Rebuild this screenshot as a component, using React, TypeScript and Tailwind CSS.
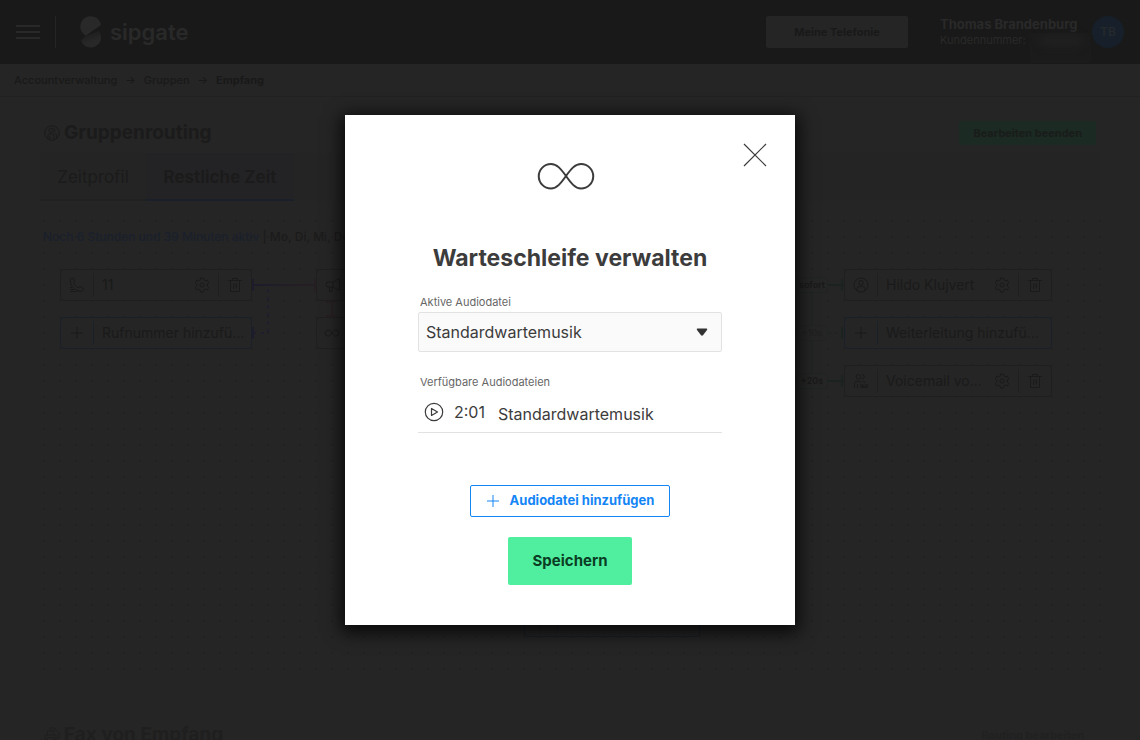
import React, { useState } from 'react';

interface IconProps {
    className?: string;
}

const GearIcon = ({ className }: IconProps) => (
    <svg viewBox="0 0 16 16" className={className} fill="none" stroke="currentColor" strokeLinejoin="round" aria-hidden="true">
        <path d="M6.6 1h2.8l.5 2 1.4.8 2-.6 1.4 2.4L13.2 7v2l1.5 1.4-1.4 2.4-2-.6-1.4.8-.5 2H6.6l-.5-2-1.4-.8-2 .6-1.4-2.4L2.8 9V7L1.3 5.6l1.4-2.4 2 .6L6.1 3z" />
        <circle cx="8" cy="8" r="2.1" />
    </svg>
);

const TrashIcon = ({ className }: IconProps) => (
    <svg viewBox="0 0 16 16" className={className} fill="none" stroke="currentColor" aria-hidden="true">
        <path d="M1 3.5h14M5.5 3.5v-2h5v2M3.5 3.5v11h9v-11M6.7 6.5v5M9.3 6.5v5" />
    </svg>
);

const PhoneIcon = ({ className }: IconProps) => (
    <svg viewBox="0 0 16 16" className={className} fill="none" stroke="currentColor" strokeLinejoin="round" aria-hidden="true">
        <path d="M2.2 1.5 4 1l1.8 3-1.2 1.4c.6 2.4 2.3 4.3 4.9 5.3l1.6-1.1 3.4 1.9-.4 1.9c-.9 1-2.6 1.3-4.6.7C5.5 12.9 2.1 9 1.4 5c-.2-1.5 0-2.8.8-3.5z" />
        <path d="M1 10.5h2M1 12.5h4M1 14.5h6" />
    </svg>
);

const PlusIcon = ({ className }: IconProps) => (
    <svg viewBox="0 0 14 14" className={className} fill="none" stroke="currentColor" aria-hidden="true">
        <path d="M7 1v12M1 7h12" />
    </svg>
);

const PersonIcon = ({ className }: IconProps) => (
    <svg viewBox="0 0 16 16" className={className} fill="none" stroke="currentColor" aria-hidden="true">
        <circle cx="8" cy="8" r="7" />
        <circle cx="8" cy="5.8" r="2.3" />
        <path d="M4 13.5v-1.5c0-1.7 1.3-2.7 4-2.7s4 1 4 2.7v1.5" />
    </svg>
);

const VoicemailIcon = ({ className }: IconProps) => (
    <svg viewBox="0 0 16 16" className={className} fill="none" stroke="currentColor" aria-hidden="true">
        <circle cx="5.5" cy="3.8" r="2.3" />
        <path d="M9 1.5a2.3 2.3 0 0 1 0 4.6M1.5 15v-4.5c0-1.5 1-2.3 3.5-2.3 1.5 0 2.7.5 3 1.3M4.5 11v4M9.5 8.2c1.8 0 2.5.8 2.5 2" />
        <circle cx="9" cy="13" r="1.4" />
        <circle cx="13.5" cy="13" r="1.4" />
        <path d="M9 14.4h4.5" />
    </svg>
);

const MegaphoneIcon = ({ className }: IconProps) => (
    <svg viewBox="0 0 16 16" className={className} fill="none" stroke="currentColor" strokeLinejoin="round" aria-hidden="true">
        <path d="M8 5 14.5 1.5v12L8 10H3.5a2.5 2.5 0 0 1 0-5zM8 5v5M4.5 10v4.5H7V10" />
    </svg>
);

const GroupIcon = ({ className }: IconProps) => (
    <svg viewBox="0 0 16 16" className={className} fill="none" stroke="currentColor" aria-hidden="true">
        <circle cx="8" cy="8" r="7.3" />
        <circle cx="7" cy="5.3" r="2" />
        <path d="M9.5 3.5a2 2 0 0 1 0 3.8M4 14v-3c0-1.5 1-2.2 3-2.2s3 .7 3 2.2v4M6 11.5V15M10.5 8.5c1.5.1 2.2.9 2.2 2.2v2.5" />
    </svg>
);

const FaxIcon = ({ className }: IconProps) => (
    <svg viewBox="0 0 16 16" className={className} fill="none" stroke="currentColor" strokeLinejoin="round" aria-hidden="true">
        <path d="M3.5 8V4h6v4M1 13V8h11v5h-2M3.5 10.5h6.5V15H3.5zM1 13h2.5M6 2.5V1h5v2.5h2l2 2V11h-1.5" />
    </svg>
);

interface InfinityProps extends IconProps {
    strokeWidth?: number;
}

const InfinityIcon = ({ className, strokeWidth = 2 }: InfinityProps) => (
    <svg viewBox="0 0 72 64" className={className} fill="none" stroke="currentColor" strokeWidth={strokeWidth} aria-hidden="true">
        <path d="M32 32C27 25 23 20 17 20a12 12 0 0 0 0 24.5C23 44.5 27 39 32 32S41 20 47 20a12 12 0 0 1 0 24.5C41 44.5 37 39 32 32z" />
    </svg>
);

const LogoIcon = ({ className }: IconProps) => (
    <svg viewBox="0 0 22 32" className={className} aria-hidden="true">
        <defs>
            <linearGradient id="logo-fade" x1="0.2" y1="0" x2="0.6" y2="1">
                <stop offset="0.1" stopColor="#1c1c1c" />
                <stop offset="0.7" stopColor="#282828" />
            </linearGradient>
        </defs>
        <path d="M19 15A10.3 10.3 0 1 1 1 24.5L5.7 19.7z" fill="url(#logo-fade)" />
        <path d="M5.7 19.7A10.4 10.4 0 1 1 21 9z" fill="#292929" />
    </svg>
);

interface NodeProps {
    label?: string;
    icon: React.ReactNode;
    position: string;
    add?: boolean;
}

const RoutingNode = ({ label, icon, position, add }: NodeProps) => (
    <div className={`absolute flex h-8 items-center rounded-sm border bg-[#252525] text-[#1a1a1a] ${add ? 'border-[#192028]' : 'border-[#1f1f1f]'} ${position}`}>
        <span className="flex w-8 shrink-0 justify-center">{icon}</span>
        <span className={`h-6 border-l ${add ? 'border-[#192028]' : 'border-[#1f1f1f]'}`} />
        {label && <span className="flex-1 pl-2 text-sm whitespace-nowrap">{label}</span>}
        {label && !add && (
            <>
                <button type="button" aria-label={`${label} bearbeiten`} className="flex w-8 justify-center">
                    <GearIcon className="size-4" />
                </button>
                <span className="h-6 border-l border-[#1f1f1f]" />
                <button type="button" aria-label={`${label} löschen`} className="flex w-8 justify-center">
                    <TrashIcon className="size-4" />
                </button>
            </>
        )}
    </div>
);

const Header = () => (
    <header className="flex h-16 items-center justify-between bg-[#191919] px-4 text-[#292929]">
        <div className="flex items-center">
            <button type="button" aria-label="Menü" className="flex w-6 flex-col gap-1">
                <span className="h-0.5 bg-[#292929]" />
                <span className="h-0.5 bg-[#292929]" />
                <span className="h-0.5 bg-[#292929]" />
            </button>
            <span className="ml-[15px] h-8 border-l border-[#252525]" />
            <a href="#start" className="ml-6 flex items-center gap-2">
                <LogoIcon className="h-8 w-[22px]" />
                <span className="text-[22px] leading-8 font-semibold">sipgate</span>
            </a>
        </div>
        <div className="flex items-center">
            <button type="button" className="h-8 w-[142px] rounded-xs bg-[#252525] text-[11px] font-bold text-[#191919]">
                Meine Telefonie
            </button>
            <div className="relative ml-8 w-[152px]">
                <p className="text-[13px] leading-4 font-bold whitespace-nowrap">Thomas Brandenburg</p>
                <p className="text-[11px] leading-4">Kundennummer:</p>
                {/* masked customer number */}
                <span className="absolute top-[17px] left-[90px] flex h-[30px] w-[61px] justify-center bg-[#1b1b1b] pt-1">
                    <span className="h-2 w-10 bg-[#222222] blur-xs" />
                </span>
            </div>
            <span className="flex size-8 items-center justify-center rounded-full bg-[#17202a] text-xs font-semibold text-[#25292c]">TB</span>
        </div>
    </header>
);

const Breadcrumb = () => (
    <nav className="flex h-[33px] items-center gap-2 border-b border-[#212121] px-[14px] text-[11px] font-medium text-[#191919]">
        <a href="#account">Accountverwaltung</a>
        <span>→</span>
        <a href="#gruppen">Gruppen</a>
        <span>→</span>
        <a href="#empfang" className="font-bold">Empfang</a>
    </nav>
);

const RoutingCanvas = () => (
    <section className="relative mt-3 -mr-2 -ml-1 h-[464px] bg-[radial-gradient(circle,#212121_1px,transparent_1px)] bg-[size:16px_16px] pt-4 pl-[7px]">
        <p className="text-xs leading-4 font-medium text-[#1b1b1b]">
            <span className="text-[#1a202c]">Noch 6 Stunden und 39 Minuten aktiv</span> | Mo, Di, Mi, Do,
        </p>

        {/* connectors between the nodes */}
        <svg className="absolute top-0 left-0 h-full w-[820px]" fill="none" strokeWidth="2" aria-hidden="true">
            <defs>
                <linearGradient id="line-fade" gradientUnits="userSpaceOnUse" x1="217" y1="0" x2="280" y2="0">
                    <stop stopColor="#1d1c2b" />
                    <stop offset="1" stopColor="#261e22" />
                </linearGradient>
            </defs>
            <path d="M217 72.01 280 72M217 66v12M279 66v12" stroke="url(#line-fade)" />
            <path d="M232 76v44h-14" stroke="#1f1e2c" strokeDasharray="3 5" />
            <path d="M217 114v12" stroke="#1d1c2b" />
            <path d="M296 89v14M290 89h12M290 103h12" stroke="#261f21" />
            <path d="M776 80v80" stroke="#202523" />
            <path d="M792 72h15M792 168h15M806 66v12M806 162v12" stroke="#1b2321" />
            <path d="M792 120h15" stroke="#1f2423" strokeDasharray="3 4" />
            <path d="M806 114v12" stroke="#1b2321" />
        </svg>

        <RoutingNode label="11" icon={<PhoneIcon className="size-4" />} position="top-[56px] left-[24px] w-[192px]" />
        <RoutingNode label="Rufnummer hinzufü…" icon={<PlusIcon className="size-[14px]" />} position="top-[104px] left-[24px] w-[192px]" add />
        <RoutingNode icon={<MegaphoneIcon className="size-4" />} position="top-[56px] left-[280px] w-[192px]" />
        <RoutingNode icon={<InfinityIcon className="h-4 w-[18px]" strokeWidth={4} />} position="top-[104px] left-[280px] w-[192px]" />
        <RoutingNode label="Hildo Klujvert" icon={<PersonIcon className="size-4" />} position="top-[56px] left-[808px] w-[208px]" />
        <RoutingNode label="Weiterleitung hinzufü…" icon={<PlusIcon className="size-[14px]" />} position="top-[104px] left-[808px] w-[208px]" add />
        <RoutingNode label="Voicemail vo…" icon={<VoicemailIcon className="size-4" />} position="top-[152px] left-[808px] w-[208px]" />
        <RoutingNode icon={<PlusIcon className="size-[14px]" />} position="top-[392px] left-[488px] w-[176px]" add />

        <span className="absolute top-[64px] left-[760px] flex h-4 w-8 items-center justify-center rounded-sm border border-[#1f2422] bg-[#252525] text-[9px] font-semibold text-[#191919]">sofort</span>
        <span className="absolute top-[112px] left-[760px] flex h-4 w-8 items-center justify-center rounded-sm border border-[#212423] bg-[#252525] text-[9px] font-semibold text-[#202020]">+10s</span>
        <span className="absolute top-[160px] left-[760px] flex h-4 w-8 items-center justify-center rounded-sm border border-[#1f2422] bg-[#252525] text-[9px] font-semibold text-[#191919]">+20s</span>
    </section>
);

const WaitingLoopDialog = () => {
    const [file, setFile] = useState('Standardwartemusik');

    return (
        <div
            role="dialog"
            aria-modal="true"
            aria-labelledby="dialog-title"
            className="relative flex w-[450px] max-w-full flex-col items-center bg-white px-[73px] pt-[29px] pb-10 text-[#3c3c3c] shadow-[0_4px_16px_4px_rgba(0,0,0,0.75)]"
        >
            <button type="button" aria-label="Schließen" className="absolute top-7 right-7 size-6">
                <svg viewBox="0 0 24 24" className="size-6" stroke="currentColor" strokeWidth="1.2" aria-hidden="true">
                    <path d="M1 1l22 22M23 1 1 23" />
                </svg>
            </button>
            <InfinityIcon className="h-16 w-[72px]" />
            <h1 id="dialog-title" className="mt-8 text-[23px] leading-9 font-bold whitespace-nowrap">Warteschleife verwalten</h1>

            <div className="mt-[18px] w-full">
                <label htmlFor="audio-file" className="block pl-0.5 text-[11px] leading-4 text-[#666666]">Aktive Audiodatei</label>
                <div className="relative mt-0.5">
                    <select
                        id="audio-file"
                        value={file}
                        onChange={(e) => setFile(e.target.value)}
                        className="h-10 w-full appearance-none rounded-xs border border-[#e2e2e2] bg-[#fafafa] px-[7px]"
                    >
                        <option>Standardwartemusik</option>
                    </select>
                    <svg viewBox="0 0 12 8" className="pointer-events-none absolute top-4 right-[14px] h-2 w-3" fill="#333333" aria-hidden="true">
                        <path d="M1.5.5h9q1.2.4.5 1.5L7 7.3q-1 .9-2 0L1 2Q.3.9 1.5.5z" />
                    </svg>
                </div>
            </div>

            <div className="mt-[22px] w-full">
                <h2 className="pl-0.5 text-[11px] leading-4 text-[#666666]">Verfügbare Audiodateien</h2>
                <ul>
                    <li className="mt-0.5 flex h-[41px] items-center border-b border-[#e2e2e2] pl-1.5">
                        <button type="button" aria-label="Abspielen">
                            <svg viewBox="0 0 20 20" className="size-5" fill="none" stroke="currentColor" strokeWidth="1.2" strokeLinejoin="round" aria-hidden="true">
                                <circle cx="10" cy="10" r="8.7" />
                                <path d="M7.5 6.5v7L13.5 10z" />
                            </svg>
                        </button>
                        <span className="ml-2.5 w-11">2:01</span>
                        <span className="pt-1">Standardwartemusik</span>
                    </li>
                </ul>
            </div>

            <button type="button" className="mt-[52px] flex h-8 items-center gap-2.5 rounded-xs border border-[#1485f5] px-[15px] text-[13px] font-bold whitespace-nowrap text-[#1485f5]">
                <PlusIcon className="size-[14px]" />
                Audiodatei hinzufügen
            </button>
            <button type="button" className="mt-5 h-12 rounded-xs bg-[#4fef9f] px-[25px] text-[15px] font-bold text-[#0b3d24]">Speichern</button>
        </div>
    );
};

const App = () => {
    return (
        <div className="relative h-screen overflow-hidden bg-[#252525] font-['Inter','Liberation_Sans',sans-serif]">
            <Header />
            <Breadcrumb />
            <main className="px-10 pt-6">
                <div className="flex h-6 items-center justify-between pr-1 pl-1">
                    <h2 className="flex items-center gap-1 text-[19px] font-bold text-[#1b1b1b]">
                        <GroupIcon className="size-4" />
                        Gruppenrouting
                    </h2>
                    <button type="button" className="h-6 rounded-xs bg-[#1b2a22] px-[14px] text-[11px] font-bold text-[#1a1c1b]">Bearbeiten beenden</button>
                </div>
                <div className="mt-2 flex h-12 bg-[#242424] text-[17px] text-[#1b1b1b]">
                    <button type="button" className="w-[106px] border-b-2 border-[#212121] pt-1">Zeitprofil</button>
                    <button type="button" className="w-[148px] border-b-2 border-[#1a202a] bg-[#232325] pt-1 font-bold">Restliche Zeit</button>
                </div>
                <RoutingCanvas />
                <div className="mt-11 flex items-center justify-between pr-4 pl-1">
                    <h2 className="flex items-center gap-1 text-[19px] font-bold text-[#1f1f1f]">
                        <FaxIcon className="size-4" />
                        Fax von Empfang
                    </h2>
                    <button type="button" className="text-[11px] font-bold text-[#212121]">Routing bearbeiten</button>
                </div>
            </main>
            <div className="absolute inset-0 flex items-center justify-center">
                <WaitingLoopDialog />
            </div>
        </div>
    );
};

export default App;
